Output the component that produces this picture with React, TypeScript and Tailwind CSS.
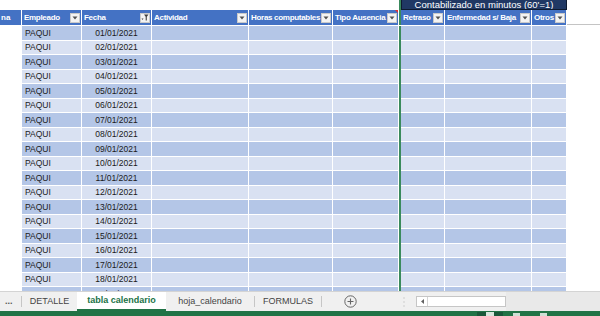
import React from 'react';

// column widths in px (each includes its 1px white right border)
const cols = [
  { key: 'emp', label: 'Empleado', w: 60 },
  { key: 'fecha', label: 'Fecha', w: 70, filtered: true },
  { key: 'act', label: 'Actividad', w: 97 },
  { key: 'horas', label: 'Horas computables', w: 84 },
  { key: 'tipo', label: 'Tipo Ausencia', w: 66, note: true },
];
const cols2 = [
  { key: 'ret', label: 'Retraso', w: 44 },
  { key: 'enf', label: 'Enfermedad s/ Baja', w: 87 },
  { key: 'otros', label: 'Otros', w: 35 },
];

const days = Array.from({ length: 19 }, (_, i) => String(i + 1).padStart(2, '0') + '/01/2021');

const DropBtn = ({ filtered }: { filtered?: boolean }) => (
  <span className="ml-auto mr-[1px] w-[10px] h-[10px] shrink-0 bg-[#f3f3f3] border border-[#c9c9c9] flex items-center justify-center">
    {filtered ? (
      <svg width="8" height="7" viewBox="0 0 8 7">
        <path d="M0.5 4.5h2l-1 1.5z" fill="#404040" />
        <path d="M3 0.5h4.5l-1.7 2.2v3.8h-1.1v-3.8z" fill="#404040" />
      </svg>
    ) : (
      <svg width="6" height="4" viewBox="0 0 6 4">
        <path d="M0.5 0.5h5l-2.5 3z" fill="#505050" />
      </svg>
    )}
  </span>
);

const HeadCell = ({ c }: { c: { label: string; w: number; filtered?: boolean; note?: boolean } }) => (
  <div
    className="relative h-full flex items-center bg-[#4472c4] border-r border-white pl-[2px] text-white font-bold text-[8px] leading-none tracking-[-0.3px] whitespace-nowrap overflow-hidden"
    style={{ width: c.w }}
  >
    <span>{c.label}</span>
    <DropBtn filtered={c.filtered} />
    {c.note && (
      <span className="absolute top-0 right-0 w-0 h-0 border-l-[3px] border-l-transparent border-t-[3px] border-t-[#e03030]" />
    )}
  </div>
);

const GreenLine = () => <div className="w-[2px] h-full bg-[#3a8a5c] shrink-0" />;

export default function App() {
  return (
    <div className="w-[600px] h-[316px] overflow-hidden bg-white flex flex-col font-['Liberation_Sans',Arial,sans-serif]">
      {/* sheet */}
      <div className="h-[291px] overflow-hidden flex flex-col">
        {/* group title row */}
        <div className="h-[10px] flex shrink-0">
          <div className="w-[399px]" />
          <GreenLine />
          <div className="w-[166px] h-full bg-[#203864] border-x border-b border-[#0e1a30] text-white text-[9.5px] leading-[10px] flex items-center justify-center overflow-hidden">
            Contabilizado en minutos (60'=1)
          </div>
        </div>

        {/* header row */}
        <div className="h-[16px] flex shrink-0 border-b border-white">
          <div className="w-[22px] h-full bg-[#4472c4] border-r border-white flex items-center pl-[1px] text-white font-bold text-[8px] leading-none">
            na
          </div>
          {cols.map((c) => (
            <HeadCell key={c.key} c={c} />
          ))}
          <GreenLine />
          {cols2.map((c) => (
            <HeadCell key={c.key} c={c} />
          ))}
          <div className="flex-1 h-[15px] border-b border-[#c4c4c4]" />
        </div>

        {/* data rows */}
        {days.map((d, i) => {
          const bg = i % 2 === 0 ? 'bg-[#b4c6e7]' : 'bg-[#d9e1f2]';
          return (
            <div key={d} className="h-[14.5px] flex shrink-0 text-[8.5px] leading-none text-[#1a1a1a]">
              <div className="w-[22px] h-full" />
              {cols.map((c) => (
                <div
                  key={c.key}
                  className={`h-full ${bg} border-r border-b border-white flex items-center whitespace-nowrap ${
                    c.key === 'fecha' ? 'justify-center' : 'pl-[3px]'
                  }`}
                  style={{ width: c.w }}
                >
                  {c.key === 'emp' ? 'PAQUI' : c.key === 'fecha' ? d : ''}
                </div>
              ))}
              <GreenLine />
              {cols2.map((c) => (
                <div key={c.key} className={`h-full ${bg} border-r border-b border-white`} style={{ width: c.w }} />
              ))}
            </div>
          );
        })}
      </div>

      {/* sheet tabs */}
      <div className="h-[20px] shrink-0 flex items-stretch bg-[#f0f0f0] border-t border-[#d4d4d4] text-[9px] leading-none text-[#444]">
        <div className="w-[21px] flex items-center pl-[5px] font-bold text-[#555]">...</div>
        <div className="w-px my-[4px] bg-[#c6c6c6]" />
        <div className="w-[55px] flex items-center justify-center">DETALLE</div>
        <div className="w-[89px] flex items-center justify-center bg-white font-bold text-[#217346] border-b-2 border-[#217346]">
          tabla calendario
        </div>
        <div className="w-[88px] flex items-center justify-center">hoja_calendario</div>
        <div className="w-px my-[4px] bg-[#c6c6c6]" />
        <div className="w-[66px] flex items-center justify-center">FORMULAS</div>
        <div className="w-px my-[4px] bg-[#c6c6c6]" />
        <div className="w-[68px] flex items-center pl-[22px]">
          <svg width="13" height="13" viewBox="0 0 13 13">
            <circle cx="6.5" cy="6.5" r="5.7" fill="none" stroke="#666" strokeWidth="1" />
            <path d="M6.5 3.5v6M3.5 6.5h6" stroke="#666" strokeWidth="1.1" />
          </svg>
        </div>
        <div className="w-[26px] flex items-center pl-[13px]">
          <svg width="2" height="10" viewBox="0 0 2 10">
            <rect x="0.5" y="0.5" width="1" height="1" fill="#aaa" />
            <rect x="0.5" y="4.5" width="1" height="1" fill="#aaa" />
            <rect x="0.5" y="8.5" width="1" height="1" fill="#aaa" />
          </svg>
        </div>
        <div className="flex items-center">
          <div className="w-[90px] h-[11px] bg-white border border-[#c6c6c6] flex">
            <div className="w-[11px] h-full border-r border-[#d4d4d4] flex items-center justify-center">
              <svg width="3" height="5" viewBox="0 0 3 5">
                <path d="M3 0v5L0 2.5z" fill="#606060" />
              </svg>
            </div>
          </div>
        </div>
        <div className="flex-1 bg-[#e9e9e9]" />
      </div>

      {/* status bar */}
      <div className="flex-1 bg-[#217346] flex items-end">
        <div className="w-[477px]" />
        <div className="w-[26px] h-[4px] bg-[#19583a] flex justify-center">
          <div className="w-[8px] h-full bg-[#d6e6dc]" />
        </div>
        <div className="w-[10px]" />
        <div className="w-[7px] h-[3px] bg-[#cfe0d5]" />
        <div className="w-[20px]" />
        <div className="w-[7px] h-[3px] bg-[#cfe0d5]" />
      </div>
    </div>
  );
}
